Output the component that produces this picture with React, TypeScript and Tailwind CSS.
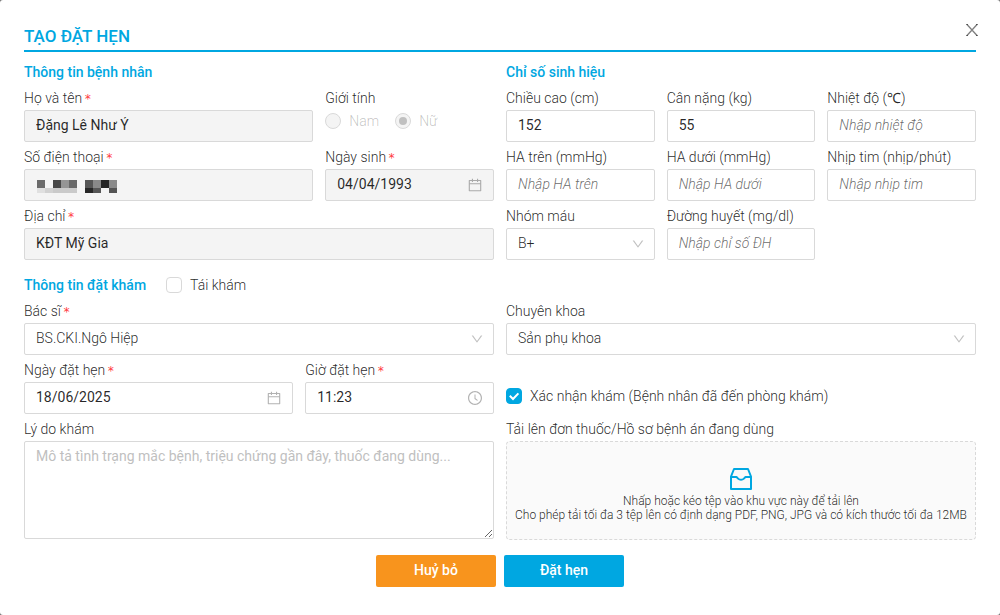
import { useId, type ReactNode } from 'react';
import { AiOutlineCalendar, AiOutlineClockCircle, AiOutlineDown } from 'react-icons/ai';

const box = 'block h-8 w-full rounded-[2px] border border-[#d9d9d9] px-[11px] pb-0.5 text-sm outline-none focus:border-[#00a7e1]';
const valueText = 'bg-white text-black/85 disabled:bg-[#f4f4f4]';

function CloseIcon() {
  return (
    <svg viewBox="0 0 14 14" className="size-3.5" fill="none" stroke="currentColor" aria-hidden="true">
      <path d="M2 1.5 12 12.5M12 1.5 2 12.5" strokeWidth="1.3" />
      <path d="M1 1.5h2M11 1.5h2M1 12.5h2M11 12.5h2" strokeWidth="1" />
    </svg>
  );
}

function InboxIcon() {
  return (
    <svg viewBox="0 0 24 24" className="size-6 text-[#00a7e1]" fill="none" stroke="currentColor" strokeWidth="2" strokeLinejoin="round" aria-hidden="true">
      <path d="M5 2h14L22 9.5V22H2V9.5z" />
      <path d="M2 10h5.5l1.6 1.6c.8.8 1.6 1.2 2.9 1.2s2.1-.4 2.9-1.2L16.5 10H22" />
    </svg>
  );
}

function Label({ id, text, required }: { id: string; text: string; required?: boolean }) {
  return (
    <label htmlFor={id} className="block h-[23px] text-sm leading-[22px] font-light whitespace-nowrap text-black/85">
      {text}
      {required && <span className="ml-0.5 font-['DejaVu_Sans_Mono',monospace] text-xs leading-none font-normal text-[#ff3b3f]">*</span>}
    </label>
  );
}

type FieldProps = {
  label: string;
  value?: string;
  placeholder?: string;
  required?: boolean;
  disabled?: boolean;
  icon?: ReactNode;
  className?: string;
  children?: ReactNode;
};

function TextField({ label, value, placeholder, required, disabled, icon, className = '', children }: FieldProps) {
  const id = useId();
  return (
    <div className={className}>
      <Label id={id} text={label} required={required} />
      <div className="relative">
        <input
          id={id}
          type="text"
          defaultValue={value}
          placeholder={placeholder}
          disabled={disabled}
          className={`${box} ${valueText} placeholder:font-light placeholder:text-black/60 placeholder:italic`}
        />
        {icon && <span className="pointer-events-none absolute inset-y-0 right-[11px] flex items-center text-base text-black/30">{icon}</span>}
        {children}
      </div>
    </div>
  );
}

function SelectField({ label, value, required, className = '' }: FieldProps) {
  const id = useId();
  return (
    <div className={className}>
      <Label id={id} text={label} required={required} />
      <div className="relative">
        <select id={id} defaultValue={value} className={`${box} appearance-none bg-white font-light text-black/85`}>
          <option>{value}</option>
        </select>
        <AiOutlineDown className="pointer-events-none absolute top-1/2 right-2.5 size-3.5 -translate-y-1/2 text-black/25" />
      </div>
    </div>
  );
}

function Check({ text, checked }: { text: string; checked?: boolean }) {
  return (
    <label className="flex items-center gap-2 text-sm leading-[22px] font-light text-black/85">
      <span className="relative block size-4">
        <input
          type="checkbox"
          defaultChecked={checked}
          className="peer block size-4 appearance-none rounded-[4px] border border-[#d9d9d9] bg-white checked:border-[#00a7e1] checked:bg-[#00a7e1]"
        />
        <svg viewBox="0 0 16 16" className="pointer-events-none absolute inset-0 hidden size-4 peer-checked:block" fill="none" stroke="white" strokeWidth="2">
          <path d="M3.8 7.8 7 11l5.4-5.6" />
        </svg>
      </span>
      {text}
    </label>
  );
}

function Gender({ text, checked }: { text: string; checked?: boolean }) {
  return (
    <label className="flex items-center gap-2 text-sm leading-[22px] font-light text-black/25">
      <input
        type="radio"
        name="gender"
        disabled
        defaultChecked={checked}
        className="grid size-4 appearance-none place-content-center rounded-full border border-[#d9d9d9] bg-[#f4f4f4] before:block before:size-2 before:rounded-full checked:before:bg-[#c0c0c0]"
      />
      {text}
    </label>
  );
}

function Heading({ children }: { children: ReactNode }) {
  return <h2 className="text-sm leading-[22px] font-medium text-[#00a7e1]">{children}</h2>;
}

const maskTop = ['#6b6b6b', '#f4f4f4', '#474747', '#959595', '#696969', '#f4f4f4', '#565656', '#898989', '#252525', '#8a8a8a'];
const maskBottom = ['#e0e0e0', '#d2d2d2', '#cacaca', '#cacaca', '#cacaca', '#f4f4f4', '#272727', '#565656', '#f4f4f4', '#545454'];

function HiddenNumber() {
  return (
    <svg viewBox="0 0 80 13" className="pointer-events-none absolute top-[11px] left-[13px] h-[13px] w-20" shapeRendering="crispEdges" aria-hidden="true">
      {maskTop.map((c, i) => <rect key={i} x={i * 8} y="0" width="8" height="8" fill={c} />)}
      {maskBottom.map((c, i) => <rect key={i} x={i * 8} y="8" width="8" height="5" fill={c} />)}
    </svg>
  );
}

export default function App() {
  const reasonId = useId();
  return (
    <div className="min-h-screen bg-[#737373] font-[Roboto,sans-serif]">
      <form role="dialog" aria-labelledby="dialog-title" className="min-h-screen rounded-[3px] bg-white px-6 pt-[23px] pb-7" onSubmit={(e) => e.preventDefault()}>
        <header className="flex items-start justify-between border-b-2 border-[#00a7e1]">
          <h1 id="dialog-title" className="h-[27px] pt-0.5 text-[17px] leading-[22px] font-medium text-[#00a7e1]">TẠO ĐẶT HẸN</h1>
          <button type="button" aria-label="Đóng" className="-mr-1 px-px text-black/50">
            <CloseIcon />
          </button>
        </header>

        <div className="mt-[9px] grid grid-cols-2 gap-x-3">
          <section className="flex flex-col gap-1">
            <Heading>Thông tin bệnh nhân</Heading>
            <div className="grid grid-cols-8 gap-x-3 gap-y-1">
              <TextField label="Họ và tên" value="Đặng Lê Như Ý" required disabled className="col-span-5" />
              <fieldset className="col-span-3">
                <legend className="h-[23px] text-sm leading-[22px] font-light text-black/85">Giới tính</legend>
                <div className="flex gap-4">
                  <Gender text="Nam" />
                  <Gender text="Nữ" checked />
                </div>
              </fieldset>
              <TextField label="Số điện thoại" required disabled className="col-span-5">
                <HiddenNumber />
              </TextField>
              <TextField label="Ngày sinh" value="04/04/1993" required disabled icon={<AiOutlineCalendar />} className="col-span-3" />
              <TextField label="Địa chỉ" value="KĐT Mỹ Gia" required disabled className="col-span-8" />
            </div>
          </section>

          <section className="flex flex-col gap-1">
            <Heading>Chỉ số sinh hiệu</Heading>
            <div className="grid grid-cols-3 gap-x-3 gap-y-1">
              <TextField label="Chiều cao (cm)" value="152" />
              <TextField label="Cân nặng (kg)" value="55" />
              <TextField label="Nhiệt độ (℃)" placeholder="Nhập nhiệt độ" />
              <TextField label="HA trên (mmHg)" placeholder="Nhập HA trên" />
              <TextField label="HA dưới (mmHg)" placeholder="Nhập HA dưới" />
              <TextField label="Nhịp tim (nhịp/phút)" placeholder="Nhập nhịp tim" />
              <SelectField label="Nhóm máu" value="B+" />
              <TextField label="Đường huyết (mg/dl)" placeholder="Nhập chỉ số ĐH" />
            </div>
          </section>
        </div>

        <div className="mt-3.5 mb-1 flex items-center gap-5">
          <Heading>Thông tin đặt khám</Heading>
          <Check text="Tái khám" />
        </div>

        <div className="grid grid-cols-2 gap-x-3 gap-y-1">
          <SelectField label="Bác sĩ" value="BS.CKI.Ngô Hiệp" required />
          <SelectField label="Chuyên khoa" value="Sản phụ khoa" />

          <div className="grid grid-cols-12 gap-x-3">
            <TextField label="Ngày đặt hẹn" value="18/06/2025" required icon={<AiOutlineCalendar />} className="col-span-7" />
            <TextField label="Giờ đặt hẹn" value="11:23" required icon={<AiOutlineClockCircle />} className="col-span-5" />
          </div>
          <div className="pt-[26px]">
            <Check text="Xác nhận khám (Bệnh nhân đã đến phòng khám)" checked />
          </div>

          <div>
            <Label id={reasonId} text="Lý do khám" />
            <textarea
              id={reasonId}
              placeholder="Mô tả tình trạng mắc bệnh, triệu chứng gần đây, thuốc đang dùng..."
              className="block h-[98px] w-full rounded-[2px] border border-[#d9d9d9] px-[11px] py-[3px] text-sm leading-[22px] text-black/85 outline-none placeholder:text-[#bfbfbf] focus:border-[#00a7e1]"
            />
          </div>
          <div>
            <p className="h-[23px] text-sm leading-[22px] font-light text-black/85">Tải lên đơn thuốc/Hồ sơ bệnh án đang dùng</p>
            <button type="button" className="flex h-[99px] w-full flex-col items-center rounded-[4px] border border-dashed border-[#d9d9d9] bg-[#fafafa] pt-[25px] text-xs leading-3.5 font-light text-black/85">
              <InboxIcon />
              <span className="mt-[3px]">Nhấp hoặc kéo tệp vào khu vực này để tải lên</span>
              <span>Cho phép tải tối đa 3 tệp lên có định dạng PDF, PNG, JPG và có kích thước tối đa 12MB</span>
            </button>
          </div>
        </div>

        <footer className="mt-[15px] flex justify-center gap-2 text-sm font-medium text-white">
          <button type="button" className="h-8 w-[120px] rounded-[2px] bg-[#f8941d] pb-0.5">Huỷ bỏ</button>
          <button type="submit" className="h-8 w-[120px] rounded-[2px] bg-[#00a7e1] pb-0.5">Đặt hẹn</button>
        </footer>
      </form>
    </div>
  );
}
